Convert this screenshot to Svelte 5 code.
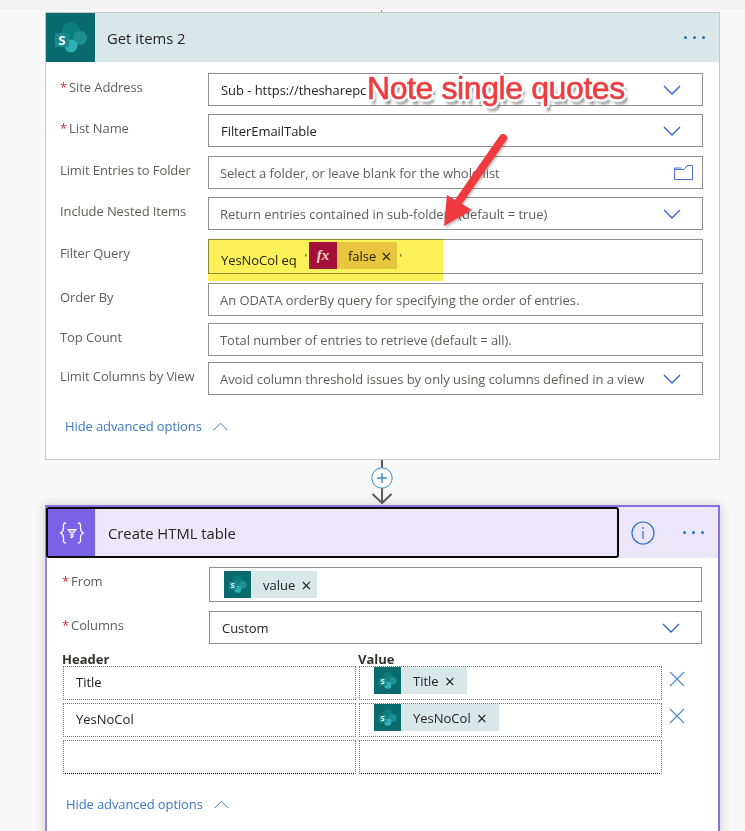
<script>
    const rowsTop = [
        { label: "Site Address", req: true, text: "Sub - https://thesharepc", icon: "chev", cls: "r1" },
        { label: "List Name", req: true, text: "FilterEmailTable", icon: "chev", cls: "r2" },
        { label: "Limit Entries to Folder", text: "Select a folder, or leave blank for the whole list", hint: true, icon: "folder", cls: "r3" },
        { label: "Include Nested Items", text: "Return entries contained in sub-folders (default = true)", hint: true, icon: "chev", cls: "r4" },
    ];
    const rowsBottom = [
        { label: "Order By", text: "An ODATA orderBy query for specifying the order of entries.", hint: true, cls: "r6" },
        { label: "Top Count", text: "Total number of entries to retrieve (default = all).", hint: true, cls: "r7" },
        { label: "Limit Columns by View", text: "Avoid column threshold issues by only using columns defined in a view", hint: true, icon: "chev", cls: "r8" },
    ];
</script>

{#snippet spIcon(size)}
    <svg class="sp" width={size} height={size} viewBox="0 0 49 49">
        <rect width="49" height="49" fill="#0a6b6e" />
        <circle cx="25" cy="18" r="9" fill="#0d7d80" />
        <circle cx="34" cy="25" r="7" fill="#1b8f92" />
        <circle cx="25" cy="33" r="6.500" fill="#2fb0b8" />
        <rect x="9" y="20" width="14" height="14" rx="1.500" fill="#1a8a8e" />
        <text x="16" y="31.500" text-anchor="middle" class="sp-s">S</text>
    </svg>
{/snippet}

{#snippet chev()}
    <svg class="chev" width="18" height="10" viewBox="0 0 18 10"><path d="M1 1l8 8 8-8" fill="none" stroke="#2f5fd0" stroke-width="1.300" /></svg>
{/snippet}

{#snippet fieldRow(r)}
    <div class="row {r.cls}">
        <div class="label">{#if r.req}<span class="star">*</span>{/if}{r.label}</div>
        <div class="field" class:hint={r.hint}>
            <span class="val">{r.text}</span>
            {#if r.icon === "chev"}
                {@render chev()}
            {:else if r.icon === "folder"}
                <svg class="folder" width="19" height="15" viewBox="0 0 19 15"><path d="M.5 14.500V4.500H10L13 .5h5.500v14z M.5 4.500V3h7" fill="none" stroke="#4a72d8" stroke-width="1" /></svg>
            {/if}
        </div>
    </div>
{/snippet}

{#snippet hideOpts()}
    <div class="hide-opts">
        <span>Hide advanced options</span>
        <svg width="15" height="9" viewBox="0 0 15 9"><path d="M.7 8L7.500 1.200 14.300 8" fill="none" stroke="#3f78c4" stroke-width="1" /></svg>
    </div>
{/snippet}

{#snippet dots()}
    <div class="dots"><i></i><i></i><i></i></div>
{/snippet}

{#snippet token(text, cls)}
    <div class="token {cls}">
        {@render spIcon(27)}
        <span class="tok-text">{text}</span>
        <span class="tok-x">×</span>
    </div>
{/snippet}

<div class="page">
    <div class="top-tick"></div>

    <section class="card first">
        <header class="head teal">
            {@render spIcon(49)}
            <h2>Get items 2</h2>
            {@render dots()}
        </header>
        <div class="body">
            {#each rowsTop as r}
                {@render fieldRow(r)}
            {/each}
            <div class="row r5">
                <div class="label">Filter Query</div>
                <div class="field filter">
                    <span class="val">YesNoCol eq</span>
                    <span class="quote">'</span>
                    <div class="fx-token">
                        <span class="fx">fx</span>
                        <span class="fx-text">false</span>
                        <span class="tok-x">×</span>
                    </div>
                    <span class="quote q2">'</span>
                </div>
            </div>
            {#each rowsBottom as r}
                {@render fieldRow(r)}
            {/each}
            {@render hideOpts()}
        </div>
    </section>

    <div class="connector">
        <div class="line"></div>
        <div class="plus">
            <svg width="22" height="22" viewBox="0 0 22 22">
                <circle cx="11" cy="11" r="10.200" fill="#fff" stroke="#3b8ac8" stroke-width="1" />
                <path d="M11 6v10M6 11h10" stroke="#3b8ac8" stroke-width="1.400" />
            </svg>
        </div>
        <svg class="arrow" width="22" height="25" viewBox="0 0 22 25">
            <path d="M11 0v23M1.500 14l9.500 9 9.500-9" fill="none" stroke="#5c5c5c" stroke-width="2" />
        </svg>
    </div>

    <section class="card second">
        <header class="head purple">
            <div class="title-box">
                <div class="var-icon">
                    <svg width="26" height="22" viewBox="0 0 26 22">
                        <path d="M7 1C4 1 4.500 3 4.500 6S4 10 1.500 11C4 12 4.500 13 4.500 16S4 21 7 21M19 1c3 0 2.500 2 2.500 5s.5 4 3 5c-2.500 1-3 2-3 5s.5 5-2.500 5" fill="none" stroke="#fff" stroke-width="1.300" />
                        <path d="M8.500 7.500h9L14 11.500v3.500l-2 1v-4.500z" fill="#b9a9f2" stroke="#fff" stroke-width="1" stroke-linejoin="round" />
                    </svg>
                </div>
                <h2>Create HTML table</h2>
            </div>
            <svg class="info" width="24" height="24" viewBox="0 0 24 24">
                <circle cx="12" cy="12" r="11" fill="none" stroke="#2f72c4" stroke-width="1.200" />
                <path d="M12 10v8" stroke="#2f72c4" stroke-width="1.200" />
                <circle cx="12" cy="7" r=".9" fill="#2f72c4" />
            </svg>
            {@render dots()}
        </header>
        <div class="body body2">
            <div class="row2 from">
                <div class="label"><span class="star">*</span>From</div>
                <div class="field tokens">{@render token("value", "tok-value")}</div>
            </div>
            <div class="row2 cols">
                <div class="label"><span class="star">*</span>Columns</div>
                <div class="field"><span class="val">Custom</span>{@render chev()}</div>
            </div>
            <div class="table-head"><b>Header</b><b>Value</b></div>
            <div class="kv">
                <div class="cell"><span class="cell-text">Title</span></div>
                <div class="cell cell-tok">{@render token("Title", "")}</div>
                <svg class="del" width="16" height="16" viewBox="0 0 16 16"><path d="M1 1l14 14M15 1L1 15" stroke="#4b88cc" stroke-width="1.100" /></svg>

                <div class="cell"><span class="cell-text">YesNoCol</span></div>
                <div class="cell cell-tok">{@render token("YesNoCol", "")}</div>
                <svg class="del" width="16" height="16" viewBox="0 0 16 16"><path d="M1 1l14 14M15 1L1 15" stroke="#4b88cc" stroke-width="1.100" /></svg>

                <div class="cell last"></div>
                <div class="cell last"></div>
            </div>
            {@render hideOpts()}
        </div>
    </section>

    <!-- annotations pasted over the screenshot -->
    <div class="marker"></div>
    <div class="note">Note single quotes</div>
    <svg class="note-arrow" width="80" height="100" viewBox="0 0 80 100">
        <path d="M59 5L15 68" stroke="#ef3b3f" stroke-width="8" stroke-linecap="round" fill="none" />
        <path d="M0 93L3 62 28 77z" fill="#ef3b3f" />
    </svg>
</div>

<style>
    :global(body) {
        margin: 0;
        background: #f8f8f8;
    }

    .page {
        position: relative;
        width: 745px;
        height: 831px;
        overflow: hidden;
        box-sizing: border-box;
        padding: 12px 0 0 45px;
        font-family: "Open Sans", "Noto Sans", sans-serif;
        font-size: 13px;
        color: #252423;
        background: linear-gradient(#f3f3f3 0 10px, #f8f8f8 10px);
    }

    .top-tick {
        position: absolute;
        left: 381px;
        top: 10px;
        width: 1px;
        height: 2px;
        background: #888;
    }

    .card {
        width: 675px;
        box-sizing: border-box;
        background: #fff;
    }
    .first {
        height: 448px;
        border: 1px solid #c8c8c8;
    }
    .second {
        height: 340px;
        border: 2px solid #8b70e0;
        border-left-color: #9c86d8;
        border-bottom: 0;
        box-shadow: 0 0 10px rgba(0, 0, 0, 0.18);
    }

    .head {
        display: flex;
        align-items: center;
    }
    .teal {
        height: 49px;
        background: #d8e7e8;
    }
    .purple {
        height: 51px;
        background: #ece6fb;
    }
    h2 {
        margin: 0;
        padding-top: 1px;
        font-size: 14.800px;
        font-weight: 400;
        color: #252423;
    }
    .teal h2 {
        margin-left: 12px;
        flex: 1;
    }

    .sp {
        display: block;
        flex: none;
    }
    .sp-s {
        font-family: "Open Sans", sans-serif;
        font-size: 13px;
        font-weight: 700;
        fill: #fff;
    }

    .dots {
        display: flex;
        gap: 6px;
        margin-right: 14px;
    }
    .dots i {
        width: 3px;
        height: 3px;
        border-radius: 50%;
        background: #2a6fc0;
    }

    .body {
        padding: 11px 17px 0 14px;
    }

    .row {
        display: grid;
        grid-template-columns: 148px 495px;
        margin-bottom: 8px;
    }
    .r2, .r4 { margin-bottom: 9px; }
    .r5 { margin-bottom: 9px; }
    .r6 { margin-bottom: 7px; }
    .r7 { margin-bottom: 6px; }

    .label {
        padding-top: 5px;
        color: #605e5c;
        white-space: nowrap;
        letter-spacing: -0.1px;
    }
    .star {
        color: #d13438;
        margin-right: 2px;
    }

    .field {
        height: 33px;
        box-sizing: border-box;
        border: 1px solid #8f8f8f;
        display: flex;
        align-items: center;
        padding: 0 21px 0 12px;
        background: #fff;
        white-space: nowrap;
        overflow: hidden;
    }
    .val {
        flex: 1;
        letter-spacing: -0.05px;
    }
    .hint {
        padding-left: 11px;
    }
    .hint .val {
        color: #605e5c;
    }
    .chev, .folder {
        flex: none;
    }
    .folder {
        margin-right: -12px;
    }

    .filter {
        height: 35px;
        padding-right: 0;
    }
    .filter .val {
        flex: none;
        margin-top: 6px;
    }
    .quote {
        margin: 2px 2px 0 8px;
        font-size: 10px;
    }
    .q2 {
        margin-left: 3px;
    }
    .fx-token {
        display: flex;
        align-items: center;
        height: 27px;
        margin-bottom: 2px;
        background: #ecd0b2;
    }
    .fx {
        position: relative;
        z-index: 2;
        width: 28px;
        height: 27px;
        display: flex;
        align-items: center;
        justify-content: center;
        background: #a4103a;
        color: #f3d3c0;
        font-family: "Liberation Serif", serif;
        font-style: italic;
        font-weight: 700;
        font-size: 15px;
    }
    .fx-text {
        margin-left: 11px;
    }
    .tok-x {
        margin: 0 12px 0 6px;
        font-size: 18px;
        line-height: 1;
    }
    .tok-value .tok-x {
        margin-right: 5px;
    }
    .fx-token .tok-x {
        margin: 0 5px;
    }

    .hide-opts {
        display: flex;
        align-items: center;
        gap: 11px;
        margin-top: 22px;
        margin-left: 5px;
        color: #3f78c4;
        letter-spacing: -0.1px;
    }

    .connector {
        position: relative;
        width: 22px;
        height: 45px;
        margin-left: 326px;
    }
    .line {
        position: absolute;
        left: 10px;
        top: 0;
        width: 2px;
        height: 10px;
        background: #5c5c5c;
    }
    .plus {
        position: absolute;
        left: 0;
        top: 7px;
        z-index: 1;
        height: 22px;
    }
    .arrow {
        position: absolute;
        left: 0;
        top: 20px;
        z-index: 0;
    }

    .title-box {
        width: 573px;
        height: 51px;
        margin-left: -1px;
        box-sizing: border-box;
        border: 2px solid #0c0c0c;
        border-radius: 3px;
        display: flex;
        align-items: center;
        flex: none;
    }
    .var-icon {
        width: 47px;
        height: 47px;
        background: #7b61e6;
        display: flex;
        align-items: center;
        justify-content: center;
    }
    .title-box h2 {
        margin-left: 13px;
    }
    .info {
        margin-left: 12px;
        margin-right: 28px;
        flex: none;
    }

    .body2 {
        padding: 9px 16px 0 15px;
    }
    .row2 {
        display: grid;
        grid-template-columns: 147px 493px;
    }
    .from {
        margin-bottom: 9px;
    }
    .from .field {
        height: 35px;
        padding-left: 14px;
    }
    .cols .field {
        padding-right: 21px;
    }

    .token {
        display: flex;
        align-items: center;
        height: 27px;
        background: #d8e7e8;
    }
    .tok-text {
        margin-left: 12px;
    }

    .table-head {
        display: grid;
        grid-template-columns: 296px auto;
        margin-top: 8px;
        height: 14px;
        line-height: 14px;
        font-size: 13px;
        color: #323130;
    }
    .kv {
        display: grid;
        grid-template-columns: 293px 303px 16px;
        column-gap: 3px;
        margin-left: 1px;
        row-gap: 3px;
    }
    .cell {
        height: 34px;
        box-sizing: border-box;
        border: 1px dotted #777;
        display: flex;
        align-items: center;
        padding-left: 12px;
        padding-bottom: 2px;
    }
    .cell-tok {
        padding: 0 0 5px 14px;
    }
    .cell.last {
        border-bottom: 1px dotted #000;
    }
    .del {
        margin: 5px 0 0 4px;
    }
    .body2 .hide-opts {
        margin-top: 21px;
        margin-left: 4px;
    }

    .marker {
        position: absolute;
        left: 208px;
        top: 239px;
        width: 235px;
        height: 42px;
        background: #fbf25a;
        mix-blend-mode: multiply;
        z-index: 1;
    }
    .note {
        position: absolute;
        left: 367px;
        top: 69px;
        z-index: 3;
        font-family: "Liberation Sans", sans-serif;
        font-size: 32px;
        line-height: 38px;
        color: #ef3b3f;
        -webkit-text-stroke: 0.6px #ef3b3f;
        white-space: nowrap;
        letter-spacing: -0.4px;
        text-shadow:
            3px 0 0 #fff, -3px 0 0 #fff, 0 3px 0 #fff, 0 -3px 0 #fff,
            2px 2px 0 #fff, -2px 2px 0 #fff, 2px -2px 0 #fff, -2px -2px 0 #fff,
            3px 5px 3px rgba(0, 0, 0, 0.55);
    }
    .note-arrow {
        position: absolute;
        left: 444px;
        top: 133px;
        z-index: 3;
        filter: drop-shadow(1px 2px 1px rgba(0, 0, 0, 0.25));
    }
</style>
